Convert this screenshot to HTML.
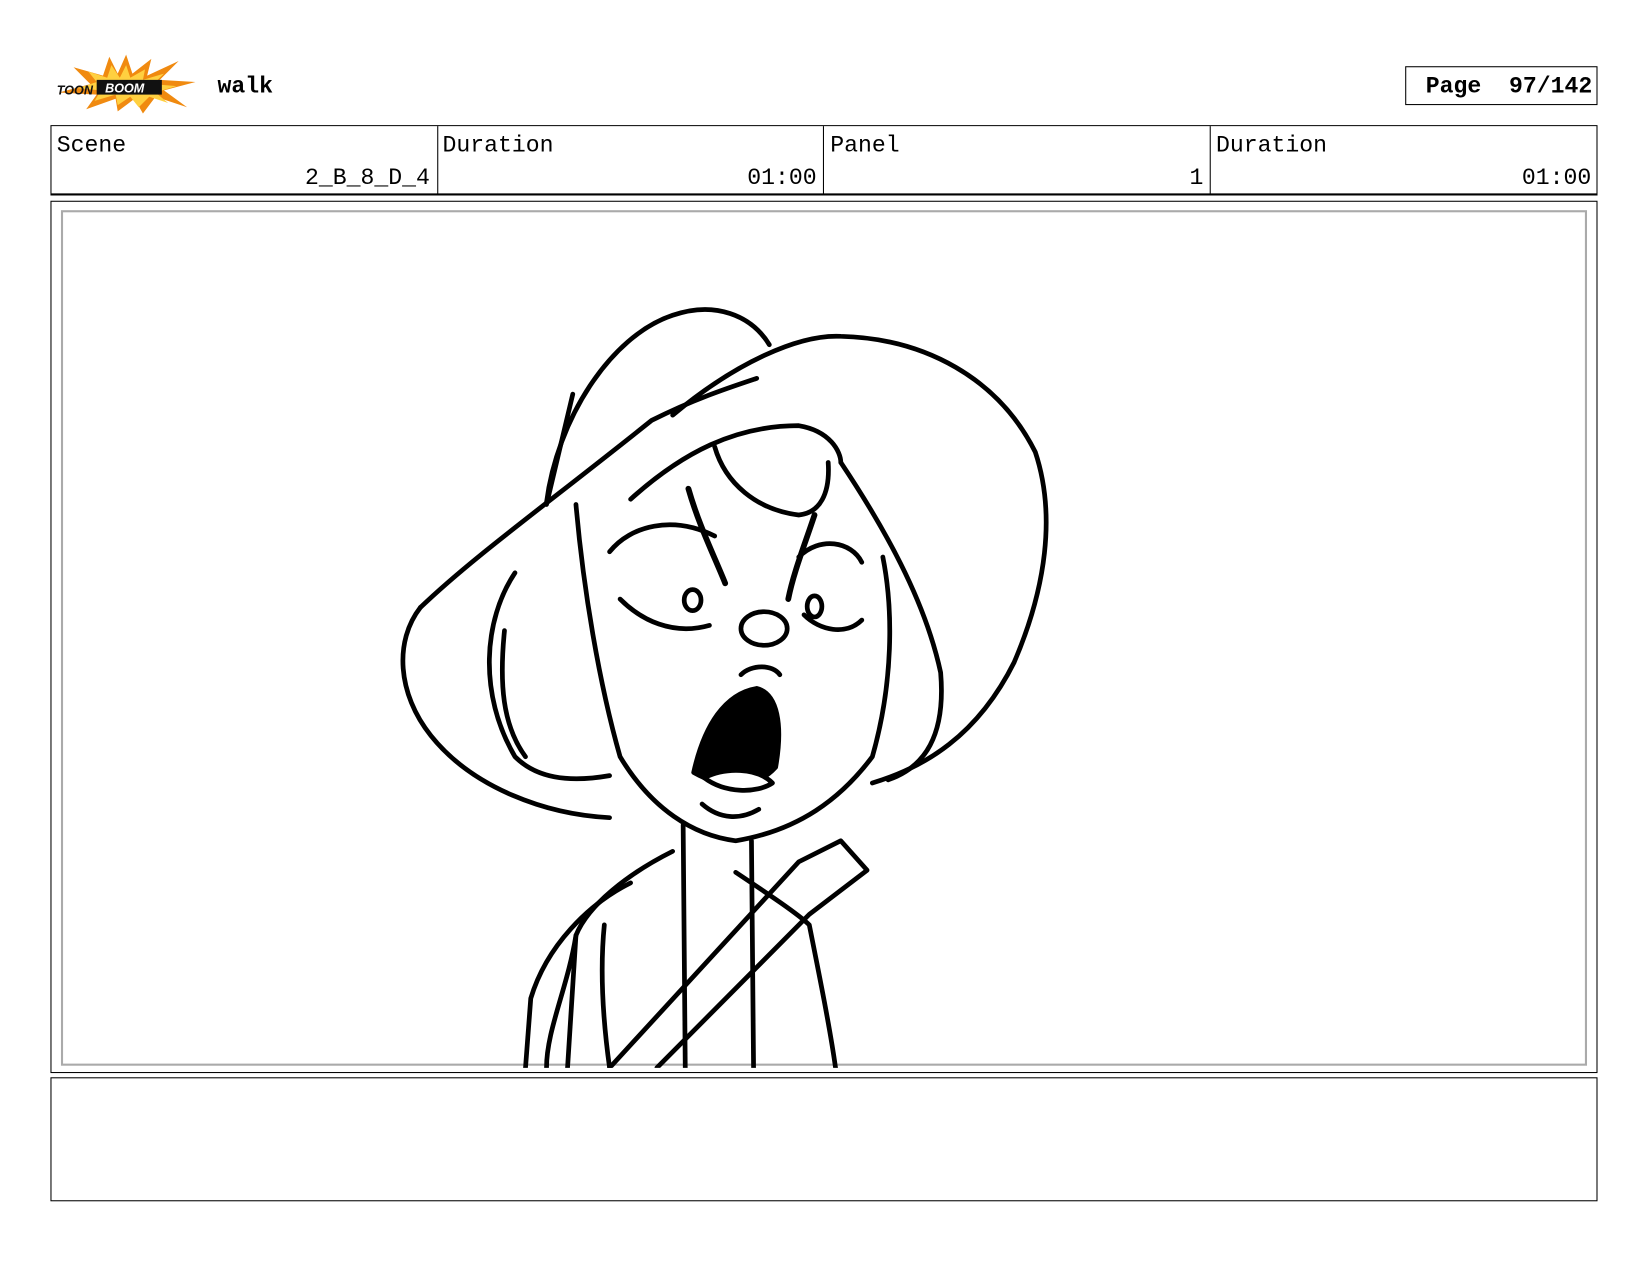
<!DOCTYPE html>
<html><head><meta charset="utf-8"><style>
html,body{margin:0;padding:0;background:#fff;width:1648px;height:1276px;overflow:hidden}
#w{position:absolute;left:0;top:0;width:1568px;height:1214px;transform:scale(1.051);transform-origin:0 0;font-family:"Liberation Mono",monospace;color:#000}
.a{position:absolute}
.t{font-size:22px;line-height:22px}
</style></head><body><div id="w">
<svg class="a" style="left:52px;top:50px" width="136" height="58" viewBox="0 0 136 58">
<polygon fill="#f08a10" points="68,2 74,20 92,6 88,22 118,8 100,26 134,28 104,36 126,52 96,42 84,58 76,44 60,56 58,44 30,54 40,40 4,38 34,30 18,14 46,22 52,4 60,20" />
<polygon fill="#ffd040" points="68,12 72,24 86,16 84,26 104,20 94,30 116,32 96,38 108,48 90,42 80,52 72,42 60,50 58,40 38,46 44,36 22,34 40,28 32,18 50,24 54,12 62,24"/>
<rect x="40" y="26" width="62" height="14" fill="#111"/>
<text x="2" y="40" font-family="Liberation Sans" font-weight="bold" font-style="italic" font-size="12" fill="#111">TOON</text>
<text x="48" y="38" font-family="Liberation Sans" font-weight="bold" font-style="italic" font-size="12" fill="#fff">BOOM</text>
</svg>
<div class="a t" style="left:207px;top:72px;font-weight:bold">walk</div>
<div class="a t" style="left:1337px;top:63px;width:183px;height:37px;border:1px solid #000;font-weight:bold;line-height:37px;text-align:right;padding-right:4px;box-sizing:border-box">Page&nbsp; 97/142</div>
<div class="a" style="left:48px;top:119px;width:1472px;height:67px;border:1px solid #000;box-sizing:border-box;border-width:1px 1px 2px 1px"></div>
<div class="a" style="left:416px;top:120px;width:1px;height:65px;background:#000"></div>
<div class="a" style="left:783px;top:120px;width:1px;height:65px;background:#000"></div>
<div class="a" style="left:1151px;top:120px;width:1px;height:65px;background:#000"></div>
<div class="a t" style="left:54px;top:128px">Scene</div>
<div class="a t" style="left:421px;top:128px">Duration</div>
<div class="a t" style="left:790px;top:128px">Panel</div>
<div class="a t" style="left:1157px;top:128px">Duration</div>
<div class="a t" style="left:200px;top:159px;width:209px;text-align:right">2_B_8_D_4</div>
<div class="a t" style="left:560px;top:159px;width:217px;text-align:right">01:00</div>
<div class="a t" style="left:900px;top:159px;width:245px;text-align:right">1</div>
<div class="a t" style="left:1300px;top:159px;width:214px;text-align:right">01:00</div>
<div class="a" style="left:48px;top:191px;width:1472px;height:830px;border:1px solid #000;box-sizing:border-box"></div>
<div class="a" style="left:58px;top:200px;width:1452px;height:814px;border:2px solid #aaa;box-sizing:border-box"></div>
<div class="a" style="left:48px;top:1025px;width:1472px;height:118px;border:1px solid #000;box-sizing:border-box"></div>
<svg class="a" style="left:0;top:0" width="1568" height="1016" viewBox="0 0 1568 1016" fill="none" stroke="#000" stroke-width="4.5" stroke-linecap="round" stroke-linejoin="round">
<path d="M520,478 C530,400 580,320 640,300 C680,286 715,300 732,328"/>
<path d="M545,375 L520,480"/>
<path d="M640,395 C700,345 760,318 800,320 C880,322 950,360 985,430 C1005,490 995,560 965,630 C930,700 880,730 830,745"/>
<path d="M400,578 C450,530 520,480 620,400 C660,380 690,370 720,360"/>
<path d="M400,578 C375,610 378,660 410,700 C450,750 520,775 580,778"/>
<path d="M490,545 C460,590 455,660 490,720 C510,740 540,745 580,738"/>
<path d="M480,600 C475,650 478,690 500,720"/>
<path d="M600,475 C650,430 700,405 760,405 C790,410 800,430 800,440"/>
<path d="M800,440 C840,500 880,570 895,640 C900,700 880,730 845,742"/>
<path d="M548,480 C555,560 570,650 590,720 C620,770 660,795 700,800 C760,790 800,760 830,720 C850,650 850,580 840,530"/>
<path d="M680,425 C690,460 720,485 760,490 C780,488 790,470 788,440"/>
<path d="M655,465 C665,500 680,530 690,555" stroke-width="5.5"/>
<path d="M775,490 C765,520 755,545 750,570" stroke-width="5.5"/>
<path d="M580,525 C600,500 640,490 680,510"/>
<path d="M590,570 C610,590 640,605 675,595"/>
<path d="M760,530 C780,510 810,515 820,535"/>
<path d="M765,585 C780,600 805,605 820,590"/>
<ellipse cx="659" cy="571" rx="8" ry="10"/>
<ellipse cx="775" cy="577" rx="7" ry="10"/>
<ellipse cx="727" cy="598" rx="22" ry="16"/>
<path d="M705,642 C715,632 735,632 742,642"/>
<path d="M660,735 C670,690 690,660 720,655 C740,660 745,690 738,730 C720,750 690,752 660,735Z" fill="#000"/>
<path d="M670,740 C690,730 720,730 735,745 C720,755 690,755 670,740Z" fill="#fff"/>
<path d="M668,765 C685,780 705,780 722,770"/>
<path d="M650,785 L652,1016 M715,800 L717,1016"/>
<path d="M640,810 C600,830 560,860 548,890 C540,940 520,980 520,1016"/>
<path d="M600,840 C560,860 520,900 505,950 L500,1016"/>
<path d="M548,890 L540,1016 M575,880 C570,930 575,980 580,1016"/>
<path d="M700,830 C730,850 760,870 770,880 C780,930 790,980 795,1016"/>
<path d="M580,1016 L760,820 L800,800 L825,828 L770,870 L625,1016"/>
</svg>
</div></body></html>
